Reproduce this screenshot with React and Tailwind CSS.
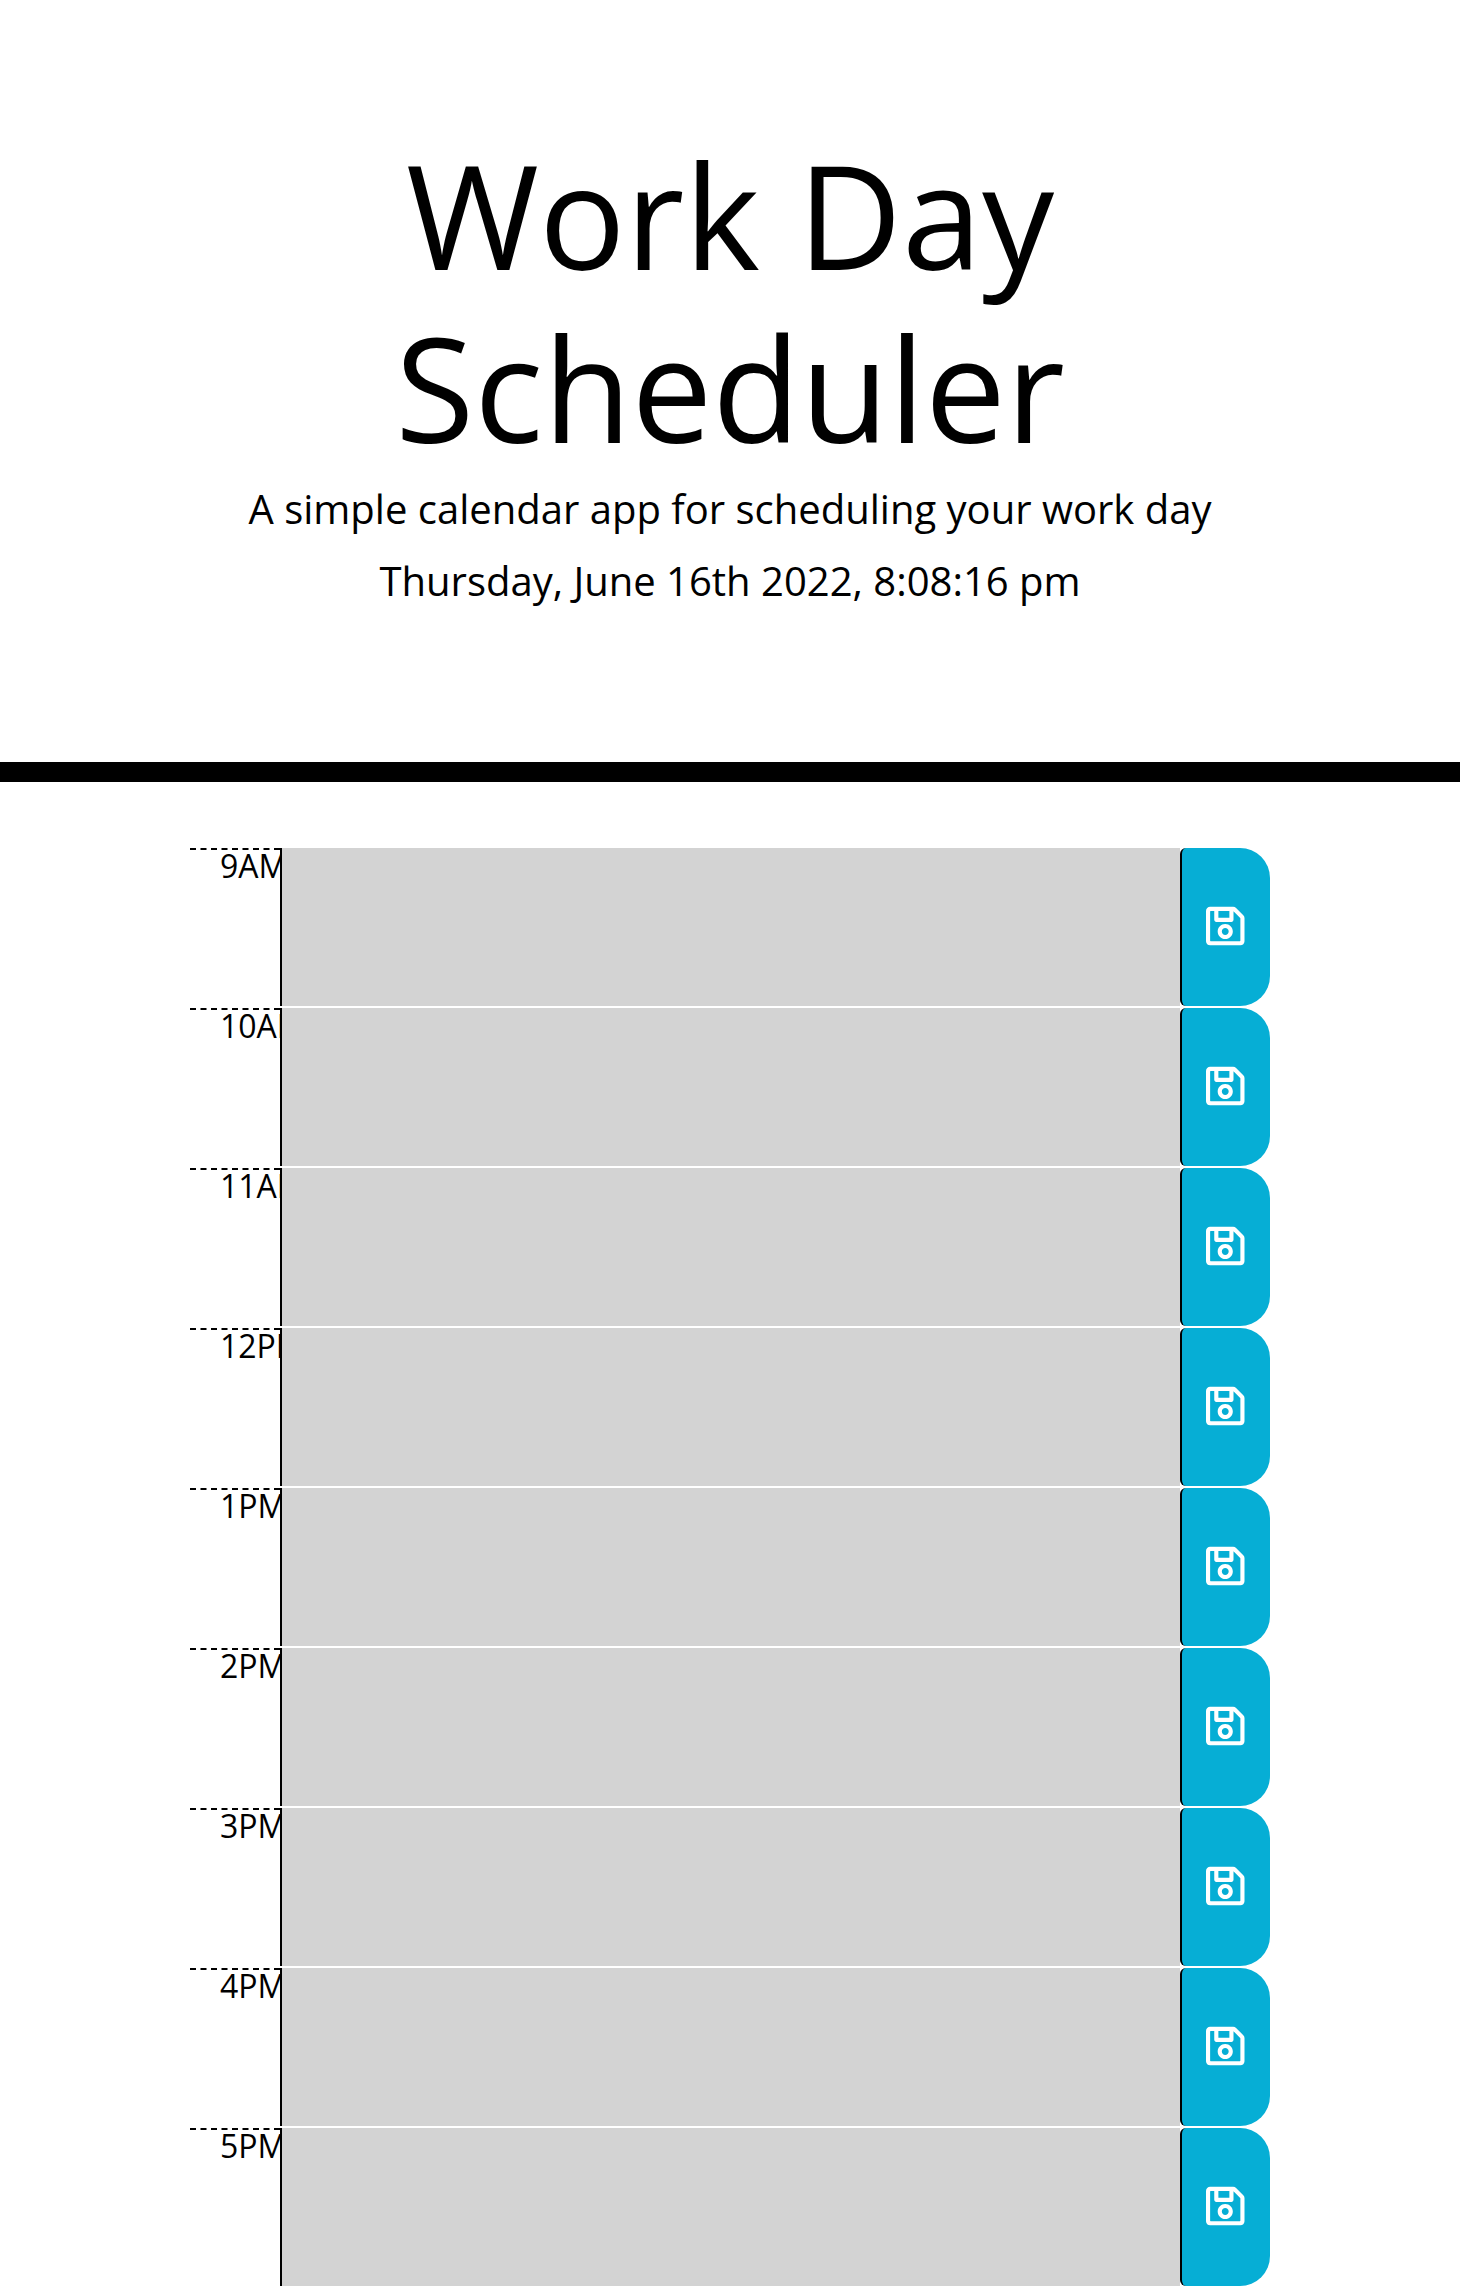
import { FaRegSave } from "react-icons/fa";

const hours = ["9AM", "10AM", "11AM", "12PM", "1PM", "2PM", "3PM", "4PM", "5PM"];

function TimeBlock({ hour }) {
  return (
    <div className="flex h-[158px]">
      <div className="w-[90px] overflow-hidden border-t-2 border-dashed border-black pl-[30px] text-[32px] leading-8 whitespace-nowrap">
        {hour}
      </div>
      <div className="flex-1 border-l-2 border-black bg-[#d3d3d3]" />
      <button className="flex w-[90px] items-center justify-center rounded-l-[6px] rounded-r-[30px] border-l-2 border-black bg-[#06aed5] pr-px pb-0.5 text-white">
        <FaRegSave className="h-[44px] w-[38.5px]" />
      </button>
    </div>
  );
}

export default function App() {
  return (
    <div className="h-[2286px] overflow-hidden bg-white font-['Open_Sans',sans-serif] text-black">
      <header className="flex h-[782px] flex-col items-center border-b-[20px] border-black pt-32 text-center">
        <h1 className="w-[800px] text-[144px] leading-[1.2]">Work Day Scheduler</h1>
        <p className="mt-[5px] text-[40px] leading-[60px]">A simple calendar app for scheduling your work day</p>
        <p className="mt-3 text-[40px] leading-[60px]">Thursday, June 16th 2022, 8:08:16 pm</p>
      </header>
      <main className="mx-auto mt-[66px] flex w-[1080px] flex-col gap-0.5">
        {hours.map((hour) => (
          <TimeBlock key={hour} hour={hour} />
        ))}
      </main>
    </div>
  );
}
